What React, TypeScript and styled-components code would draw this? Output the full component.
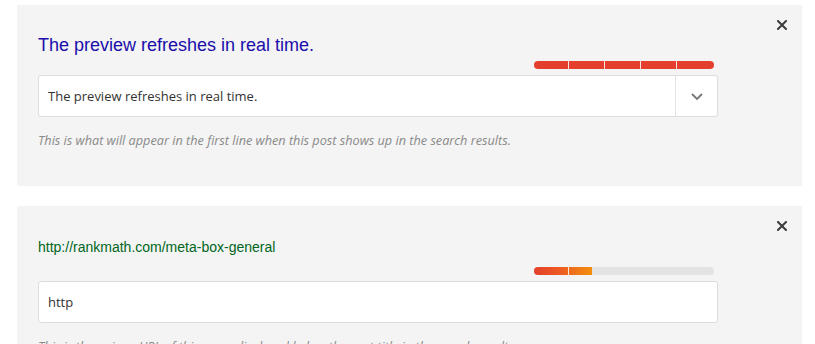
import styled, { createGlobalStyle } from 'styled-components';

const GlobalStyle = createGlobalStyle`
   * { box-sizing: border-box; }
   body {
      margin: 0;
      background: #fff;
      font-family: 'Open Sans', sans-serif;
   }
`;

const Page = styled.div`
   display: flex;
   flex-direction: column;
   gap: 20px;
   padding: 5px 13px 0 17px;
`;

const Panel = styled.section<{ $top: number }>`
   position: relative;
   background: #f4f4f4;
   padding: ${(p) => p.$top}px 84px 37px 21px;
   display: flex;
   flex-direction: column;
`;

const CloseButton = styled.button`
   position: absolute;
   top: 15px;
   right: 15px;
   width: 10px;
   height: 10px;
   padding: 0;
   border: 0;
   background: none;
   display: flex;
   cursor: pointer;
`;

const Title = styled.div`
   font-family: 'Liberation Sans', Arial, sans-serif;
   font-size: 18px;
   line-height: 22px;
   color: #1a0dab;
`;

const Url = styled.div`
   font-family: 'Liberation Sans', Arial, sans-serif;
   font-size: 14px;
   line-height: 16px;
   color: #006621;
`;

const BarRow = styled.div<{ $gap: number }>`
   display: flex;
   justify-content: flex-end;
   padding-right: 4px;
   margin: ${(p) => p.$gap}px 0 6px;
`;

const Track = styled.div`
   width: 180px;
   height: 8px;
   border-radius: 4px;
   background: #e3e3e3;
   overflow: hidden;
   display: flex;
`;

// white ticks between the five segments of the bar
const ticks = [34, 70, 106, 142]
   .map((x) => `transparent ${x}px, rgba(255,255,255,0.85) ${x}px, rgba(255,255,255,0.85) ${x + 1.5}px, transparent ${x + 1.5}px`)
   .join(', ');

const Fill = styled.div<{ $bg: string }>`
   height: 100%;
   background: linear-gradient(to right, ${ticks}), ${(p) => p.$bg};
   background-size: 180px 100%, 100% 100%;
   background-repeat: no-repeat;
`;

const InputBox = styled.div`
   display: flex;
   height: 42px;
   background: #fff;
   border: 1px solid #ddd;
   border-radius: 3px;
`;

const Input = styled.input`
   flex: 1;
   min-width: 0;
   border: 0;
   outline: none;
   background: transparent;
   padding: 0 9px;
   font-family: 'Open Sans', sans-serif;
   font-size: 13px;
   color: #333;
`;

const Toggle = styled.button`
   width: 42px;
   border: 0;
   border-left: 1px solid #e3e3e3;
   background: none;
   display: flex;
   align-items: center;
   justify-content: center;
   padding: 0;
   cursor: pointer;
`;

const Help = styled.p`
   margin: 14px 0 0;
   font-family: 'Open Sans', sans-serif;
   font-style: italic;
   font-size: 12.7px;
   line-height: 18px;
   color: #8a8a8a;
`;

const CloseIcon = () => (
   <svg width="10" height="10" viewBox="0 0 10 10">
      <path d="M1 1L9 9M9 1L1 9" stroke="#3c3c3c" strokeWidth="2" strokeLinecap="square" />
   </svg>
);

const Chevron = () => (
   <svg width="12" height="7" viewBox="0 0 12 7">
      <polyline points="1,1 6,6 11,1" fill="none" stroke="#777" strokeWidth="1.8" />
   </svg>
);

const App = () => {
   return (
      <>
         <GlobalStyle />
         <Page>
            <Panel $top={29}>
               <CloseButton>
                  <CloseIcon />
               </CloseButton>
               <Title>The preview refreshes in real time.</Title>
               <BarRow $gap={5}>
                  <Track>
                     <Fill $bg="#e43f2c" style={{ width: '100%' }} />
                  </Track>
               </BarRow>
               <InputBox>
                  <Input defaultValue="The preview refreshes in real time." />
                  <Toggle>
                     <Chevron />
                  </Toggle>
               </InputBox>
               <Help>This is what will appear in the first line when this post shows up in the search results.</Help>
            </Panel>
            <Panel $top={33}>
               <CloseButton>
                  <CloseIcon />
               </CloseButton>
               <Url>http://rankmath.com/meta-box-general</Url>
               <BarRow $gap={12}>
                  <Track>
                     <Fill $bg="linear-gradient(to right, #e4402b, #ec5b21 45%, #f38f0e)" style={{ width: 58 }} />
                  </Track>
               </BarRow>
               <InputBox>
                  <Input defaultValue="http" />
               </InputBox>
               <Help>This is the unique URL of this page, displayed below the post title in the search results.</Help>
            </Panel>
         </Page>
      </>
   );
};

export default App;
